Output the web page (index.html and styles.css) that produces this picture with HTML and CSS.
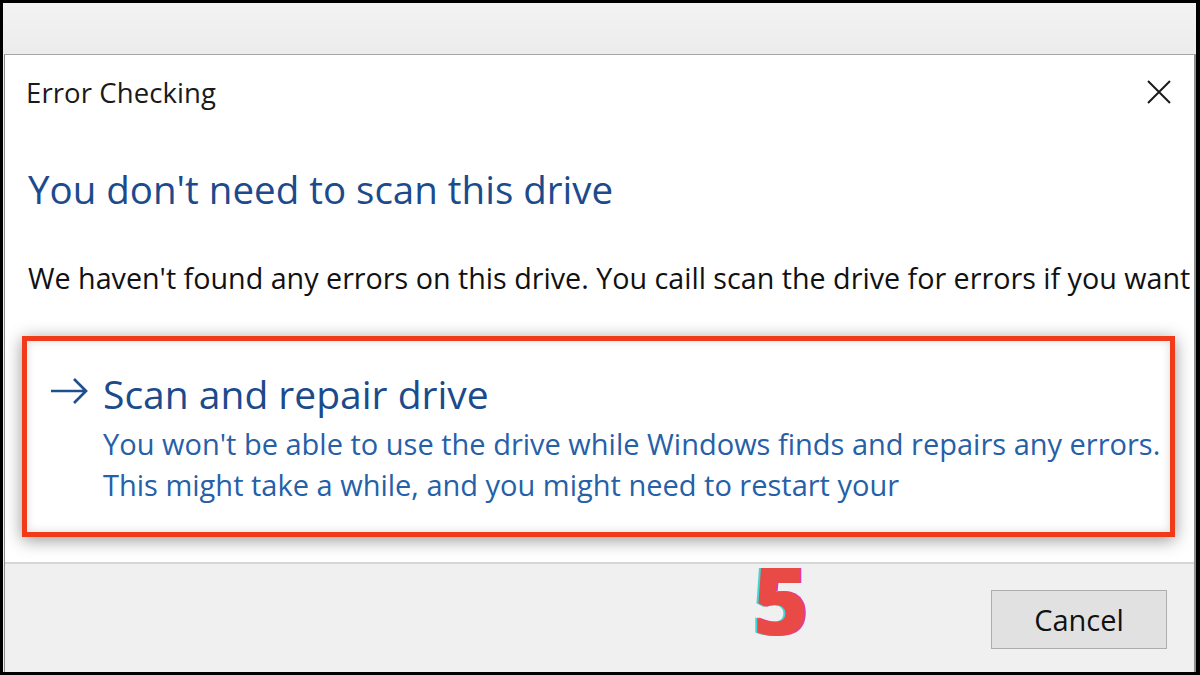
FILE: index.html
```html
<!DOCTYPE html>
<html lang="en">
<head>
    <meta charset="UTF-8">
    <meta name="viewport" content="width=device-width, initial-scale=1.0">
    <title>Error Checking</title>
    <link rel="stylesheet" href="styles.css">
</head>
<body>
    <div class="screen">
        <div class="top-strip"></div>

        <div class="dialog">
            <div class="titlebar">
                <span class="title">Error Checking</span>
                <svg class="close" width="26" height="26" viewBox="0 0 26 26">
                    <path d="M2 2 L24 24 M24 2 L2 24" stroke="#1a1a1a" stroke-width="2" fill="none"/>
                </svg>
            </div>

            <div class="content">
                <h1 class="main-instruction">You don't need to scan this drive</h1>
                <p class="body-text">We haven't found any errors on this drive. You caill scan the drive for errors if you want</p>

                <div class="highlight">
                    <div class="command">
                        <svg class="arrow" width="40" height="30" viewBox="0 0 40 30">
                            <path d="M2 15 H37 M25 3 L37 15 L25 27" stroke="#1d4f91" stroke-width="2.7" fill="none"/>
                        </svg>
                        <div class="command-text">
                            <div class="command-title">Scan and repair drive</div>
                            <div class="command-note first">You won't be able to use the drive while Windows finds and repairs any errors.</div>
                            <div class="command-note">This might take a while, and you might need to restart your</div>
                        </div>
                    </div>
                </div>
            </div>

            <div class="footer">
                <span class="step-number">5</span>
                <button class="btn">Cancel</button>
            </div>
        </div>
    </div>
</body>
</html>
```

FILE: styles.css
```css
html, body {
    margin: 0;
    padding: 0;
    background: #000;
}
body {
    font-family: "Open Sans", "Noto Sans", sans-serif;
    width: 1200px;
    height: 675px;
    overflow: hidden;
}
.screen {
    box-sizing: border-box;
    width: 1200px;
    height: 675px;
    border-style: solid;
    border-color: #000;
    border-width: 3px 4px 3px 3px;
    background: #f0f0f0;
    display: flex;
    flex-direction: column;
}
.top-strip {
    height: 51px;
    flex: none;
    background: linear-gradient(#f3f3f3, #ececec);
}
.dialog {
    flex: 1;
    margin-left: 1px;
    border-left: 1px solid #8c8c8c;
    border-right: 2px solid #8f8f8f;
    border-top: 1px solid #a6a6a6;
    display: flex;
    flex-direction: column;
    overflow: hidden;
}
.titlebar {
    height: 74px;
    flex: none;
    background: #fff;
    display: flex;
    align-items: center;
    justify-content: space-between;
    padding: 0 22px 0 21px;
}
.title {
    font-size: 27.5px;
    color: #1a1a1a;
    letter-spacing: 0.1px;
}
.content {
    background: #fff;
    padding: 0 0 25px 23px;
    white-space: nowrap;
}
.main-instruction {
    margin: 38px 0 0 0;
    font-weight: normal;
    font-size: 38.5px;
    line-height: 44px;
    color: #1b4b8c;
}
.body-text {
    margin: 50px 0 0 0;
    font-size: 28.7px;
    line-height: 34px;
    color: #111;
}
.highlight {
    margin: 41px 0 0 -6px;
    width: 1153px;
    height: 201px;
    box-sizing: border-box;
    border: 5px solid #f03a1a;
    box-shadow: 0 3px 16px rgba(0, 0, 0, 0.42), inset 0 0 10px rgba(0, 0, 0, 0.14);
    background: #fff;
    padding: 31px 0 0 22px;
}
.command {
    display: flex;
    align-items: flex-start;
}
.arrow {
    margin: 4px 14px 0 0;
    flex: none;
}
.command-title {
    font-size: 39px;
    line-height: 44px;
    color: #1b4b8c;
}
.command-note {
    font-size: 29px;
    line-height: 41px;
    color: #2560a8;
}
.command-note.first {
    margin-top: 7px;
}
.footer {
    flex: 1;
    position: relative;
    background: #f0f0f0;
    border-top: 2px solid #d6d6d6;
    display: flex;
    justify-content: flex-end;
    align-items: flex-start;
    padding: 26px 27px 0 0;
}
.btn {
    width: 176px;
    height: 59px;
    background: #e1e1e1;
    border: 1px solid #adadad;
    font-family: "Open Sans", "Noto Sans", sans-serif;
    font-size: 29px;
    color: #111;
    padding: 0;
}
.step-number {
    position: absolute;
    left: 748px;
    top: -29px;
    font-family: "Open Sans", sans-serif;
    font-weight: 800;
    font-size: 94px;
    color: #ea4a45;
    text-shadow: -2px 0 0 #3fd6d6, 2px 0 0 #e23aa0;
}
```
